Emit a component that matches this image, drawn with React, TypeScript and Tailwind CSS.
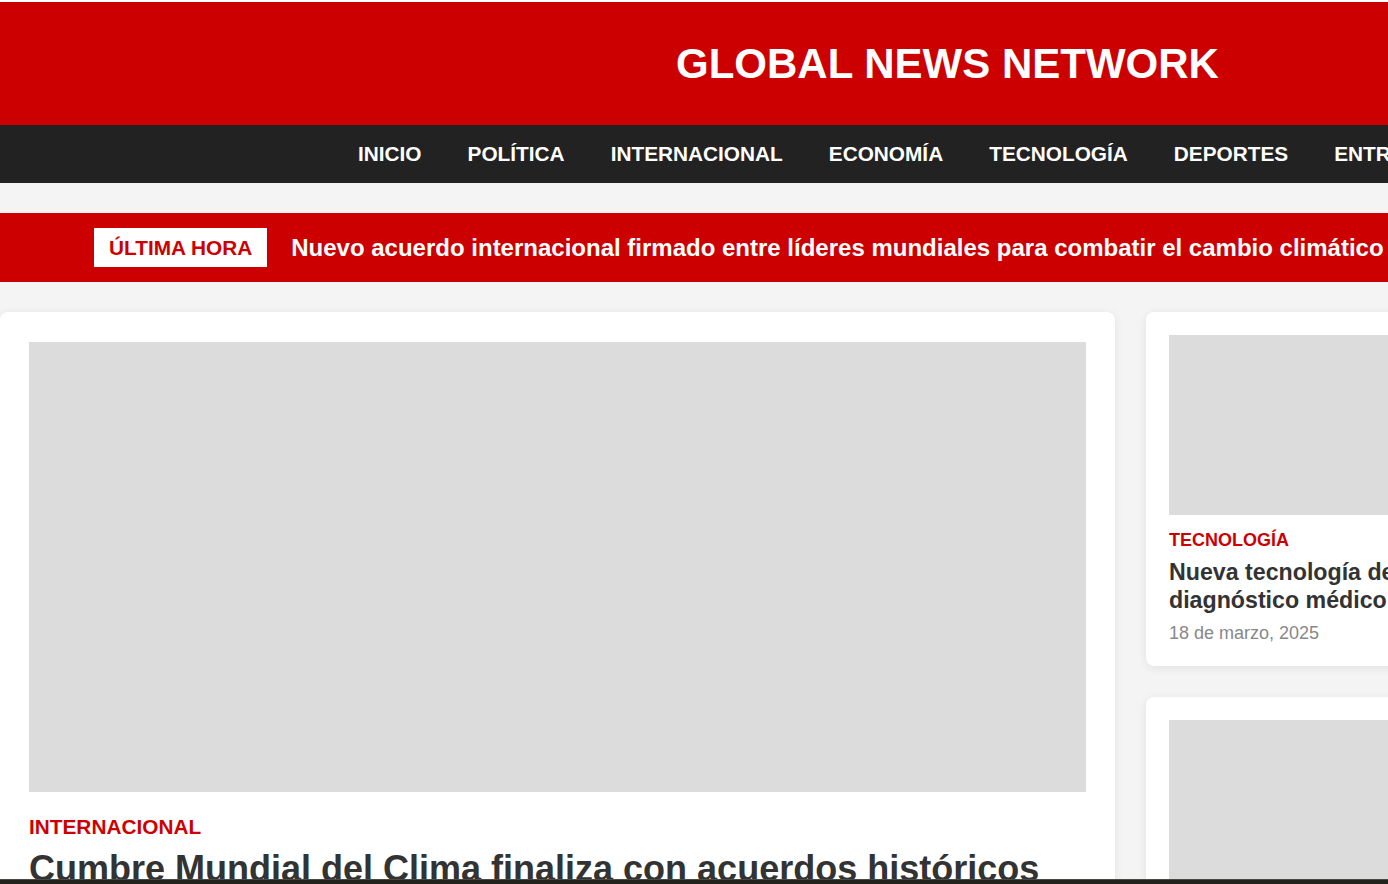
const navItems = [
	"INICIO",
	"POLÍTICA",
	"INTERNACIONAL",
	"ECONOMÍA",
	"TECNOLOGÍA",
	"DEPORTES",
	"ENTRETENIMIENTO",
];

interface SideStory {
	category: string;
	line1: string;
	line2: string;
	date: string;
}

const sideStories: SideStory[] = [
	{
		category: "TECNOLOGÍA",
		line1: "Nueva tecnología de IA revoluciona el",
		line2: "diagnóstico médico",
		date: "18 de marzo, 2025",
	},
	{
		category: "ECONOMÍA",
		line1: "Los mercados bursátiles alcanzan",
		line2: "máximos históricos",
		date: "17 de marzo, 2025",
	},
];

function SideCard({ category, line1, line2, date }: SideStory) {
	return (
		<article className="bg-white rounded-lg px-[23px] pt-[23px] pb-[19px] shadow-[0_2px_10px_rgba(0,0,0,0.08)]">
			<div className="h-[180px] bg-[#dcdcdc]" />
			<div className="mt-[12px] text-[18px] font-bold text-[#cc0000] leading-normal">{category}</div>
			<h3 className="mt-[5px] text-[23.2px] font-bold text-[#333333] leading-[1.2] whitespace-nowrap">
				{line1}
				<br />
				{line2}
			</h3>
			<div className="mt-[5px] text-[18px] text-[#888888] leading-normal">{date}</div>
		</article>
	);
}

export default function App() {
	return (
		<div className="relative w-[1388px] h-[884px] overflow-hidden bg-[#f4f4f4] font-['Liberation_Sans',Arial,sans-serif]">
			<div className="h-[2px] bg-white" />

			{/* Masthead */}
			<header className="h-[123px] bg-[#cc0000] flex items-center pl-[676px]">
				<h1 className="text-[42px] font-bold text-white leading-none whitespace-nowrap">GLOBAL NEWS NETWORK</h1>
			</header>

			{/* Main navigation */}
			<nav className="h-[58px] bg-[#222222] flex items-center pl-[358px] gap-[46px]">
				{navItems.map((item) => (
					<a key={item} href="#" className="shrink-0 text-[20.8px] font-bold text-white whitespace-nowrap">
						{item}
					</a>
				))}
			</nav>

			{/* Breaking news ticker */}
			<div className="mt-[30px] h-[69px] bg-[#cc0000] flex items-center pl-[94px] gap-[24px] whitespace-nowrap">
				<span className="shrink-0 h-[39px] px-[15px] bg-white flex items-center text-[20.8px] font-bold text-[#cc0000]">
					ÚLTIMA HORA
				</span>
				<span className="shrink-0 text-[24px] font-bold text-white">
					Nuevo acuerdo internacional firmado entre líderes mundiales para combatir el cambio climático
				</span>
			</div>

			{/* Content */}
			<main className="mt-[30px] flex items-start gap-[31px]">
				<article className="w-[1115px] shrink-0 bg-white rounded-lg px-[29px] pt-[30px] pb-[30px] shadow-[0_2px_10px_rgba(0,0,0,0.08)]">
					<div className="h-[450px] bg-[#dcdcdc]" />
					<div className="mt-[19px] text-[20.8px] font-bold text-[#cc0000] leading-normal">INTERNACIONAL</div>
					<h2 className="mt-[5px] text-[36px] font-bold text-[#333333] leading-[1.2]">
						Cumbre Mundial del Clima finaliza con acuerdos históricos
					</h2>
					<p className="mt-4 text-[18px] text-[#555555] leading-relaxed">
						Los representantes de más de 190 países alcanzaron un consenso para reducir las emisiones de gases de efecto invernadero.
					</p>
				</article>

				<aside className="w-[420px] shrink-0 flex flex-col gap-[31px]">
					{sideStories.map((s) => (
						<SideCard key={s.category} {...s} />
					))}
				</aside>
			</main>

			{/* bottom edge bar */}
			<div className="absolute bottom-0 left-0 w-full h-[5px] bg-[#23231e] border-t border-[#4a4a44]" />
		</div>
	);
}
